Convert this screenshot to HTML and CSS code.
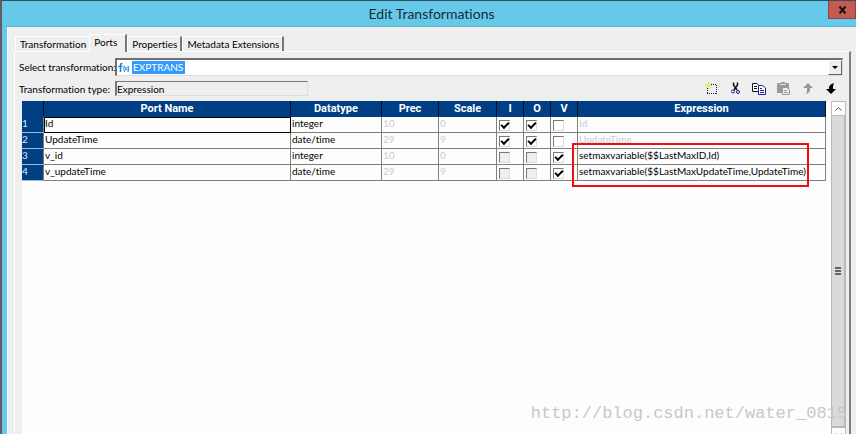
FILE: index.html
```html
<!DOCTYPE HTML>
<html lang="en">
<head>
<meta charset="utf-8" />
<title>Edit Transformations</title>
<link rel="stylesheet" href="styles.css">
</head>
<body>
<div class="window">
	<div class="titlebar">
		<h1>Edit Transformations</h1>
		<button class="close" type="button" aria-label="Close">
			<svg width="9" height="8" viewBox="0 0 9 8"><path d="M1.500 0.500L7.500 7.500M7.500 0.500L1.500 7.500" stroke="#111" stroke-width="2"/></svg>
		</button>
	</div>
	<div class="client">
		<div class="tabs" role="tablist">
			<button type="button" role="tab" class="tab">Transformation</button>
			<button type="button" role="tab" class="tab active" aria-selected="true">Ports</button>
			<button type="button" role="tab" class="tab">Properties</button>
			<button type="button" role="tab" class="tab">Metadata Extensions</button>
		</div>
		<div class="panel">
			<div class="row">
				<label for="trans">Select transformation:</label>
				<div class="combo">
					<svg class="fx" width="12" height="12" viewBox="0 0 12 12" fill="none" stroke="#1683d8">
						<path d="M4.500 1.500H4Q2.500 1.500 2.500 3V10M0.500 4.500H4.500" stroke-width="1.500"/>
						<path d="M6.500 3.500Q5 6.500 6.500 10M10 3.500Q11.500 6.500 10 10M7 5L9.500 8.500M9.500 5L7 8.500"/>
					</svg>
					<select id="trans"><option>EXPTRANS</option></select>
					<span class="arrow"></span>
				</div>
			</div>
			<div class="row type">
				<label for="type">Transformation type:</label>
				<input id="type" type="text" value="Expression" readonly>
				<div class="tools">
					<button type="button" aria-label="New port">
						<svg width="13" height="13" viewBox="0 0 13 13">
							<path d="M6 2.500H12M11.500 3V12M2 11.500H12M2.500 6V12" fill="none" stroke="#222" stroke-dasharray="1 1"/>
							<path d="M3.500 0V7M0 3.500H7M1 1L6 6M6 1L1 6" stroke="#e8e020" stroke-dasharray="2 1"/>
						</svg>
					</button>
					<button type="button" aria-label="Cut">
						<svg width="13" height="13" viewBox="0 0 13 13" fill="none">
							<path d="M4.500 0.500V3L8 8M8.500 0.500V3L5 8" stroke="#111" stroke-width="1.500"/>
							<circle cx="4" cy="9.500" r="1.500" stroke="#20208c"/><circle cx="9" cy="10" r="1.500" stroke="#20208c"/>
						</svg>
					</button>
					<button type="button" aria-label="Copy">
						<svg width="14" height="13" viewBox="0 0 14 13" fill="#fff">
							<path d="M0.500 1.500H5L7.500 4V9.500H0.500Z" stroke="#111"/>
							<path d="M2 4.500H5M2 6.500H5" stroke="#111"/>
							<path d="M6.500 3.500H10.500L13.500 6V12.500H6.500Z" stroke="#20208c"/>
							<path d="M8 6.500H10M8 8.500H12M8 10.500H12" stroke="#20208c"/>
						</svg>
					</button>
					<button type="button" aria-label="Paste" disabled>
						<svg width="13" height="13" viewBox="0 0 13 13">
							<path d="M0 2Q0 1 1 1H3.500L5 0H7L8.500 1H11Q12 1 12 2V11H0Z" fill="#999"/>
							<path d="M3 2.500H9" stroke="#ddd"/>
							<path d="M5.500 5.500H10L12.500 8V12.500H5.500Z" fill="#eee" stroke="#999"/>
							<path d="M7 8.500H10M7 10.500H11" stroke="#999"/>
						</svg>
					</button>
					<button type="button" aria-label="Move up" disabled>
						<svg width="11" height="11" viewBox="0 0 11 11"><path d="M6 0L11 5H8V8Q7 10 4 11Q5 9 5 7V5H1Z" fill="#999"/></svg>
					</button>
					<button type="button" aria-label="Move down">
						<svg width="11" height="11" viewBox="0 0 11 11"><path d="M5 11L0 6H3V4Q4 1 8 0Q7 2 7 4V6H10Z" fill="#000"/></svg>
					</button>
				</div>
			</div>
			<div class="grid">
				<div class="sheet">
					<table>
						<colgroup>
							<col class="c-num"><col class="c-name"><col class="c-type"><col class="c-prec"><col class="c-scale"><col class="c-flag"><col class="c-flag"><col class="c-flag"><col>
						</colgroup>
						<thead>
							<tr><th></th><th>Port Name</th><th>Datatype</th><th>Prec</th><th>Scale</th><th>I</th><th>O</th><th>V</th><th>Expression</th></tr>
						</thead>
						<tbody>
							<tr>
								<th scope="row">1</th><td class="current">Id</td><td>integer</td><td class="dim">10</td><td class="dim">0</td>
								<td><input type="checkbox" aria-label="Id input" checked></td>
								<td><input type="checkbox" aria-label="Id output" checked></td>
								<td><input type="checkbox" aria-label="Id variable"></td>
								<td class="dim">Id</td>
							</tr>
							<tr>
								<th scope="row">2</th><td>UpdateTime</td><td>date/time</td><td class="dim">29</td><td class="dim">9</td>
								<td><input type="checkbox" aria-label="UpdateTime input" checked></td>
								<td><input type="checkbox" aria-label="UpdateTime output" checked></td>
								<td><input type="checkbox" aria-label="UpdateTime variable"></td>
								<td class="dim">UpdateTime</td>
							</tr>
							<tr>
								<th scope="row">3</th><td>v_id</td><td>integer</td><td class="dim">10</td><td class="dim">0</td>
								<td><input type="checkbox" aria-label="v_id input" disabled></td>
								<td><input type="checkbox" aria-label="v_id output" disabled></td>
								<td><input type="checkbox" aria-label="v_id variable" checked></td>
								<td class="marked">setmaxvariable($$LastMaxID,Id)<span class="frame"></span></td>
							</tr>
							<tr>
								<th scope="row">4</th><td>v_updateTime</td><td>date/time</td><td class="dim">29</td><td class="dim">9</td>
								<td><input type="checkbox" aria-label="v_updateTime input" disabled></td>
								<td><input type="checkbox" aria-label="v_updateTime output" disabled></td>
								<td><input type="checkbox" aria-label="v_updateTime variable" checked></td>
								<td>setmaxvariable($$LastMaxUpdateTime,UpdateTime)</td>
							</tr>
						</tbody>
					</table>
				</div>
				<div class="scroll">
					<button type="button" aria-label="Scroll up"><svg width="7" height="4" viewBox="0 0 7 4"><path d="M0.500 3.500L3.500 0.500L6.500 3.500" fill="none" stroke="#555"/></svg></button>
					<div class="thumb"><span class="grip"></span></div>
					<button type="button" aria-label="Scroll down"><svg width="7" height="4" viewBox="0 0 7 4"><path d="M0.500 0.500L3.500 3.500L6.500 0.500" fill="none" stroke="#555"/></svg></button>
				</div>
			</div>
		</div>
	</div>
	<div class="watermark">http://blog.csdn.net/water_0815</div>
</div>
</body>
</html>
```
FILE: styles.css
```css
*{ box-sizing:border-box; margin:0; padding:0;}
body{ font:10px/14px Lato,"Liberation Sans",sans-serif; font-variant-ligatures:none; color:#000; background:#67c9ea; overflow:hidden;}
button,input,select{ font:inherit; color:inherit; border:0; border-radius:0; background:none;}
svg{ display:block;}

.window{ position:relative; display:flex; flex-direction:column; height:100vh; border-top:1px solid #35505c; border-left:2px solid #665c60; padding-left:5px; overflow:hidden;}
.titlebar{ display:grid; grid-template-columns:1fr auto 1fr; flex:none; height:26px; border-bottom:1px solid #62aec9;}
.titlebar h1{ grid-column:2; font:14px/26px Lato,"Open Sans",sans-serif; font-variant-ligatures:none; color:#152c36;}
.close{ justify-self:end; display:flex; align-items:center; justify-content:center; width:28px; height:18px; background:#c45a52; border:1px solid #8d4542; border-top:0;}

.client{ flex:1; display:flex; flex-direction:column; min-height:0; padding:7px 5px 0 6px; background:#efefef; border-left:1px solid #f8f8f8;}
.tabs{ display:flex; align-items:flex-end; height:17px; padding-left:1px; position:relative; z-index:1;}
.tab{ height:15px; padding:0 3px 0 4px; line-height:15px; white-space:nowrap; border-top:1px solid #fff; border-left:1px solid #fff; border-right:2px solid #777;}
.tab:first-child{ border-right:0;}
.tab.active{ height:18px; margin-bottom:-1px; padding:0 8px 3px 4px; background:#efefef;}
.panel{ flex:1; display:flex; flex-direction:column; min-height:0; padding:6px 3px 0 4px; border-top:1px solid #fff; border-left:1px solid #fff; border-right:2px solid #808080;}

.row{ display:flex; align-items:center; flex:none; padding-right:3px;}
.row label{ flex:none; width:96px; white-space:nowrap;}
.combo{ position:relative; flex:1; height:18px; border:1px solid #ddd; border-top:2px solid #707070; border-left:2px solid #707070; background:#fff;}
.combo select{ display:block; width:100%; height:15px; padding-left:16px; line-height:15px; color:#fff; appearance:none; background:linear-gradient(#3399ff,#3399ff) 15px 1px / 53px 13px no-repeat;}
.combo option{ color:#111;}
.fx{ position:absolute; left:1px; top:2px;}
.arrow{ position:absolute; right:0; top:0; width:14px; height:15px; background:#efefef; border:1px solid #fff; border-right-color:#666; border-bottom-color:#666; pointer-events:none;}
.arrow::after{ content:""; position:absolute; left:3px; top:5px; border:3px solid transparent; border-top-color:#000; border-bottom:0;}
.type{ height:25px;}
.type input{ width:193px; height:15px; border:1px solid #ddd; border-top-color:#777; border-left:2px solid #777;}
.tools{ display:flex; flex:1; justify-content:flex-end; gap:8px; padding-right:4px;}
.tools button{ display:flex; align-items:center; justify-content:center; width:16px; height:16px;}

.grid{ flex:1; display:flex; min-height:0; margin-left:3px; background:#fdfdfd;}
.sheet{ flex:1; min-width:0;}
table{ width:100%; table-layout:fixed; border-collapse:separate; border-spacing:0;}
.c-num{ width:22px;}
.c-name{ width:247px;}
.c-type{ width:91px;}
.c-prec{ width:57px;}
.c-scale{ width:58px;}
.c-flag{ width:27px;}
th,td{ height:16px; line-height:13px; white-space:nowrap; vertical-align:top; border-right:1px solid #808080; border-bottom:1px solid #808080;}
thead th{ font:bold 11px/15px Roboto,"Liberation Sans",sans-serif; color:#fff; text-align:center; background:#003f83; border-right-color:#111; border-bottom-color:#003f83;}
tbody th{ color:#dfe9f3; font-weight:normal; text-align:left; background:#003f83; border-bottom-color:#aab9c8;}
td{ padding-left:1px;}
.dim{ color:#c3cedb;}
.current{ outline:1px solid #000; outline-offset:-1px;}
td input{ display:block; width:11px; height:11px; margin:3px 0 0 1px; appearance:none; background:#fff; border:1px solid #ddd; border-top-color:#777; border-left-color:#777;}
td input:disabled{ background:#eee;}
td input:checked::after{ content:""; display:block; width:6px; height:3px; margin:1px 0 0 1px; border:solid #000; border-width:0 0 2px 2px; transform:rotate(-45deg);}
.marked{ position:relative;}
.frame{ position:absolute; left:-6px; top:-6px; width:237px; height:44px; border:2px solid #f40b0b;}

.scroll{ display:flex; flex-direction:column; width:15px; margin:0 0 -8px 5px; background:#fdfdfd;}
.scroll button{ display:flex; flex:none; align-items:center; justify-content:center; height:15px; border:1px solid #bbb;}
.thumb{ flex:1; display:flex; align-items:center; justify-content:center; background:#dadada; border:1px solid #b8b8b8; border-width:0 2px 1px 1px;}
.grip{ width:6px; height:8px; background:repeating-linear-gradient(#666 0 2px,#ddd 2px 3px);}

.watermark{ position:absolute; right:9px; bottom:10px; font:17px/20px "Liberation Mono",monospace; color:#c8c8c4; pointer-events:none;}
```
